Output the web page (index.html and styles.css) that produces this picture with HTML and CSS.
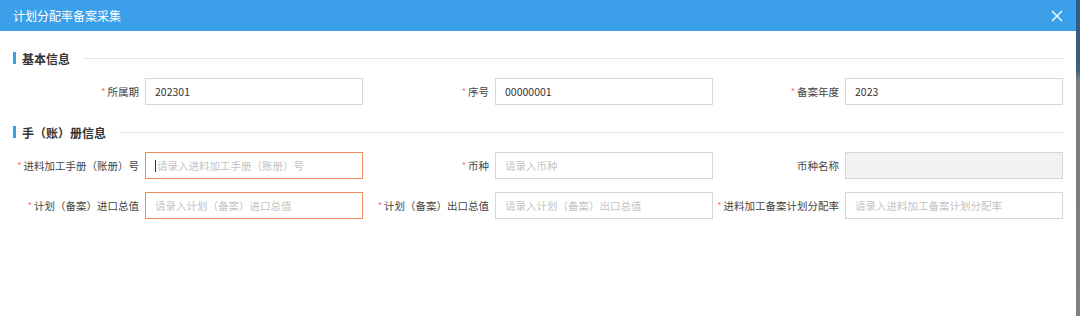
FILE: index.html
```html
<!DOCTYPE html>
<html lang="zh-CN">
<head>
<meta charset="utf-8">
<link rel="stylesheet" href="styles.css">
</head>
<body>
<div class="modal">
  <div class="header">
    <span class="title">计划分配率备案采集</span>
    <span class="close">
      <svg width="12" height="12" viewBox="0 0 12 12"><path d="M1 1L11 11M11 1L1 11" stroke="#fff" stroke-width="1.4" fill="none"/></svg>
    </span>
  </div>
  <div class="body">
    <div class="section-title"><span class="bar"></span><span class="sec-text">基本信息</span><span class="line"></span></div>
    <div class="grid">
      <div class="field"><label class="lbl"><i class="req">*</i>所属期</label><div class="input">202301</div></div>
      <div class="field"><label class="lbl"><i class="req">*</i>序号</label><div class="input">00000001</div></div>
      <div class="field"><label class="lbl"><i class="req">*</i>备案年度</label><div class="input">2023</div></div>
    </div>
    <div class="section-title sec2"><span class="bar"></span><span class="sec-text">手（账）册信息</span><span class="line"></span></div>
    <div class="grid grid2">
      <div class="field"><label class="lbl"><i class="req">*</i>进料加工手册（账册）号</label><div class="input error ph"><span class="caret"></span>请录入进料加工手册（账册）号</div></div>
      <div class="field"><label class="lbl"><i class="req">*</i>币种</label><div class="input ph">请录入币种</div></div>
      <div class="field"><label class="lbl">币种名称</label><div class="input disabled"></div></div>
      <div class="field"><label class="lbl"><i class="req">*</i>计划（备案）进口总值</label><div class="input error ph">请录入计划（备案）进口总值</div></div>
      <div class="field"><label class="lbl"><i class="req">*</i>计划（备案）出口总值</label><div class="input ph">请录入计划（备案）出口总值</div></div>
      <div class="field"><label class="lbl"><i class="req">*</i>进料加工备案计划分配率</label><div class="input ph">请录入进料加工备案计划分配率</div></div>
    </div>
  </div>
</div>
</body>
</html>
```

FILE: styles.css
```css
html, body {
  margin: 0;
  padding: 0;
  height: 316px;
  overflow: hidden;
}
body {
  background: linear-gradient(to bottom, #2c5d86 0px, #3d5f7c 70px, #7d7d7d 80px, #808080 100%);
  font-family: "Noto Sans CJK SC", "Microsoft YaHei", sans-serif;
  font-size: 12px;
  color: #333;
}
.modal {
  width: 1076px;
  height: 316px;
  background: #fff;
}
.header {
  height: 31px;
  background: #3ba0e9;
  display: flex;
  align-items: center;
  justify-content: space-between;
  padding: 0 13px 0 13px;
  box-sizing: border-box;
}
.title {
  color: #fff;
  font-size: 12px;
  line-height: 1;
}
.close {
  display: flex;
  align-items: center;
}
.body {
  padding: 18px 13px 0 13px;
}
.section-title {
  display: flex;
  align-items: center;
  height: 18px;
}
.sec2 {
  margin-top: 18px;
}
.bar {
  width: 3px;
  height: 12px;
  background: #3ba0e9;
  margin-right: 6px;
}
.sec-text {
  font-weight: bold;
  color: #333;
  font-size: 12px;
  margin-right: 13px;
}
.line {
  flex: 1;
  height: 1px;
  background: #e4e4e4;
  margin-right: -1px;
}
.grid {
  display: grid;
  grid-template-columns: repeat(3, 350px);
  row-gap: 13px;
  margin-top: 11px;
}
.grid2 {
  margin-top: 11px;
}
.field {
  display: flex;
  align-items: center;
}
.lbl {
  width: 126px;
  margin-right: 6px;
  text-align: right;
  color: #444;
  white-space: nowrap;
  font-size: 10.5px;
}
.req {
  font-style: normal;
  color: #f56c6c;
  font-size: 9px;
  margin-right: 2px;
  vertical-align: 1px;
}
.input {
  width: 218px;
  height: 27px;
  box-sizing: border-box;
  border: 1px solid #d7d7d7;
  padding-left: 9px;
  display: flex;
  align-items: center;
  color: #333;
  background: #fff;
  font-size: 10.5px;
}
.ph {
  color: #c3c3c3;
}
.error {
  border-color: #f3875f;
}
.disabled {
  background: #f2f2f2;
}
.caret {
  width: 1px;
  height: 12px;
  background: #333;
  margin-right: 1px;
}
```
